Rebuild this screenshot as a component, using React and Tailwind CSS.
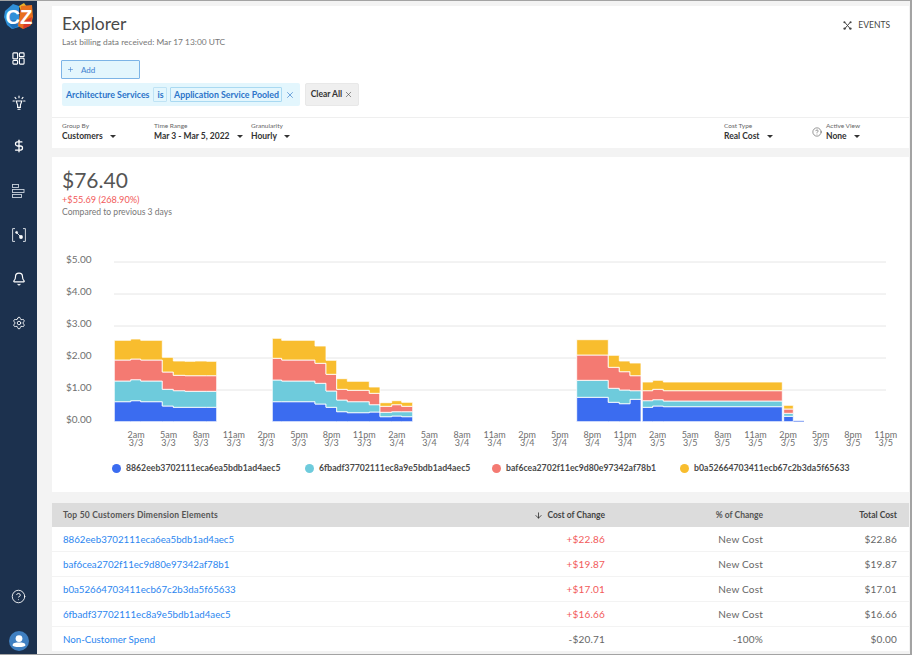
import { ArrowDown, Bell, CircleHelp, DollarSign, Plus, Settings, X } from 'lucide-react';

const font = { fontFamily: 'Lato, "Liberation Sans", sans-serif' };

const BLUE = '#3b6cf0';
const TEAL = '#6ecbdc';
const RED = '#f47a72';
const YELLOW = '#f8bd2e';

// columns are [x0, x1, blueTop, tealTop, redTop, yellowTop], measured off the reference
const GROUPS = [
  [
    [114.3, 130.7, 401.7, 381, 360, 340.3],
    [130.7, 140.7, 400.7, 379.7, 359, 339],
    [140.7, 162.3, 401.7, 381, 360, 340.3],
    [162.3, 173.3, 406, 389.3, 372, 357.3],
    [173.3, 185, 407.3, 390.7, 375.3, 361],
    [185, 195, 407.3, 391.3, 375.7, 361.3],
    [195, 206.7, 407.3, 391.3, 375.7, 361],
    [206.7, 216.7, 407.3, 391.3, 375.7, 361.3],
  ],
  [
    [272.3, 281.7, 401.7, 380, 358.3, 338.3],
    [281.7, 315, 401.7, 381, 360, 340.3],
    [315, 326, 404, 383.3, 363.3, 346],
    [326, 336.7, 407.3, 391, 374.3, 360.3],
    [336.7, 347.3, 411.7, 400, 389.3, 378.7],
    [347.3, 369.3, 412.7, 401.7, 390.3, 381.3],
    [369.3, 380, 412, 404.7, 393.3, 387],
    [380, 391.7, 416.7, 412.3, 406.3, 402.7],
    [391.7, 401.7, 416, 411.7, 404.7, 400.7],
    [401.7, 412.7, 416.7, 411.7, 406.3, 402.3],
  ],
  [
    [576.7, 608.3, 397.3, 380.3, 355, 339.7],
    [608.3, 619.3, 402.3, 388.3, 367.3, 355.3],
    [619.3, 630, 403.7, 390, 371.7, 361],
    [630, 641, 399.3, 390.7, 375.7, 363],
    [642.3, 652.7, 407.3, 400.7, 390.7, 382],
    [652.7, 663.3, 406, 399.7, 389.3, 380.3],
    [663.3, 782.3, 406.7, 401, 390.7, 382],
  ],
  [[783.7, 793.3, 416.3, 413.3, 409, 405.3]],
];

const BASE = 421.7;

const HOURS = ['2am', '5am', '8am', '11am', '2pm', '5pm', '8pm', '11pm'];
const DAYS = ['3/3', '3/4', '3/5'];
const TICKS = DAYS.flatMap((d) => HOURS.map((h) => [h, d]));

const LEGEND = [
  [BLUE, '8862eeb3702111eca6ea5bdb1ad4aec5', 'w-[193px]'],
  [TEAL, '6fbadf37702111ec8a9e5bdb1ad4aec5', 'w-[187px]'],
  [RED, 'baf6cea2702f11ec9d80e97342af78b1', 'w-[188px]'],
  [YELLOW, 'b0a52664703411ecb67c2b3da5f65633', ''],
];

const ROWS = [
  ['8862eeb3702111eca6ea5bdb1ad4aec5', '+$22.86', 'New Cost', '$22.86'],
  ['baf6cea2702f11ec9d80e97342af78b1', '+$19.87', 'New Cost', '$19.87'],
  ['b0a52664703411ecb67c2b3da5f65633', '+$17.01', 'New Cost', '$17.01'],
  ['6fbadf37702111ec8a9e5bdb1ad4aec5', '+$16.66', 'New Cost', '$16.66'],
  ['Non-Customer Spend', '-$20.71', '-100%', '$0.00'],
];

// outline of one stacked band across a group's columns
function bandPath(cols, topIdx) {
  const top = [];
  const bottom = [];
  cols.forEach((c) => {
    top.push(`${c[0]},${c[topIdx]}`, `${c[1]},${c[topIdx]}`);
    const low = topIdx === 2 ? BASE : c[topIdx - 1];
    bottom.unshift(`${c[1]},${low}`, `${c[0]},${low}`);
  });
  return `M${top.join(' L')} L${bottom.join(' L')} Z`;
}

function splitRuns(cols) {
  // columns that do not touch get their own outline
  const runs = [];
  cols.forEach((c) => {
    const last = runs[runs.length - 1];
    if (last && last[last.length - 1][1] === c[0]) last.push(c);
    else runs.push([c]);
  });
  return runs;
}

function Chart() {
  const lines = [262, 294, 326, 358, 390];
  const labels = ['$5.00', '$4.00', '$3.00', '$2.00', '$1.00', '$0.00'];
  return (
    <svg width="857" height="215" viewBox="52 245 857 215" className="block">
      {lines.map((y) => (
        <line key={y} x1="114" x2="886" y1={y} y2={y} stroke="#e6e6e6" strokeWidth="1" />
      ))}
      {labels.map((l, i) => (
        <text key={l} x="66" y={263 + i * 32} fontSize="10" fill="#6f6f6f" style={font}>
          {l}
        </text>
      ))}
      {GROUPS.flatMap(splitRuns).map((cols, i) =>
        [
          [2, BLUE],
          [3, TEAL],
          [4, RED],
          [5, YELLOW],
        ].map(([idx, color]) => (
          <path key={`${i}-${idx}`} d={bandPath(cols, idx)} fill={color} stroke="#fff" strokeWidth="0.8" />
        ))
      )}
      <rect x="793.5" y="420.8" width="10.5" height="1" fill="#7f9df3" />
      {TICKS.map(([h, d], i) => (
        <text key={i} textAnchor="middle" fontSize="9" fill="#6f6f6f" style={font}>
          <tspan x={136 + i * 32.6} y="437.5">{h}</tspan>
          <tspan x={136 + i * 32.6} y="445.5">{d}</tspan>
        </text>
      ))}
    </svg>
  );
}

function Caret() {
  return <span className="inline-block w-0 h-0 ml-[7px] mb-[1px] border-x-[3px] border-x-transparent border-t-[3px] border-t-[#333]" />;
}

function Select({ label, value, className }) {
  return (
    <div className={className}>
      <div className="text-[6.5px] leading-[9px] text-[#666]">{label}</div>
      <div className="text-[8.5px] leading-[13px] font-bold text-[#333] whitespace-nowrap">
        {value}
        <Caret />
      </div>
    </div>
  );
}

function Logo() {
  return (
    <svg width="30" height="27" viewBox="0 0 30 27">
      <path d="M1 8 L9 1 L15 3 L15 24 L8 26 L3 22 L0 14 Z" fill="#2f8fd8" />
      <path d="M3 18 L9 26 L14 23 L12 17 Z" fill="#1e6fb8" />
      <path d="M15 3 L20 0 L23 4 L17 8 Z" fill="#e9b32a" />
      <path d="M17 3 L28 2 L29 14 L27 22 L19 26 L14 23 Z" fill="#e8701f" />
      <path d="M20 18 L28 14 L26 23 L19 26 Z" fill="#d93a2b" />
      <text x="1.5" y="21" fontSize="20" fill="#fff" style={{ fontFamily: '"Liberation Sans", sans-serif', fontWeight: 700 }} textLength="27" lengthAdjust="spacingAndGlyphs">
        CZ
      </text>
    </svg>
  );
}

function GridIcon() {
  return (
    <svg width="13" height="13" viewBox="0 0 14 14" fill="none" stroke="#fff" strokeWidth="1.2">
      <rect x="1" y="1" width="5" height="6.4" rx="0.8" />
      <rect x="8" y="1" width="5" height="4" rx="0.8" />
      <rect x="1" y="9.2" width="5" height="3.8" rx="0.8" />
      <rect x="8" y="6.8" width="5" height="6.2" rx="0.8" />
    </svg>
  );
}

function BulbIcon() {
  return (
    <svg width="14" height="15" viewBox="0 0 14 15" fill="none" stroke="#fff" strokeWidth="1.1" strokeLinecap="round">
      <path d="M4.2 6 H9.8 L8.4 10.2 V12.4 H5.6 V10.2 Z" />
      <path d="M6 14.2 H8" />
      <path d="M7 1 V2.8 M3 2.4 L4 3.6 M11 2.4 L10 3.6 M1 6 H2.4 M11.6 6 H13" />
    </svg>
  );
}

function BarsIcon() {
  return (
    <svg width="13" height="14" viewBox="0 0 13 14" fill="none" stroke="#c9d2dc" strokeWidth="0.9">
      <rect x="0.5" y="0.5" width="6" height="3" />
      <rect x="0.5" y="5.5" width="11.5" height="3" />
      <rect x="0.5" y="10.5" width="9" height="3" />
    </svg>
  );
}

function NodesIcon() {
  return (
    <svg width="14" height="14" viewBox="0 0 14 14" fill="none" stroke="#e8ecf0" strokeWidth="0.9">
      <path d="M3 0.6 H0.6 V13.4 H3 M11 0.6 H13.4 V13.4 H11" />
      <path d="M4.5 4.5 L8.8 8.8" />
      <circle cx="4.6" cy="4.4" r="1" fill="#fff" />
      <circle cx="9" cy="9" r="1.9" fill="#fff" stroke="none" />
    </svg>
  );
}

function EventsIcon() {
  return (
    <svg width="9" height="9" viewBox="0 0 9 9" fill="none" stroke="#444" strokeWidth="1">
      <path d="M1.5 1 L7.5 8 M7.5 1 L1.5 8" />
      <circle cx="1.4" cy="1.2" r="1" fill="#444" stroke="none" />
      <circle cx="7.6" cy="1.2" r="1" fill="#444" stroke="none" />
      <circle cx="1.6" cy="7.6" r="1.2" fill="#444" stroke="none" />
      <circle cx="7.4" cy="7.6" r="1.2" fill="#444" stroke="none" />
    </svg>
  );
}

function Avatar() {
  return (
    <svg width="20" height="20" viewBox="0 0 20 20">
      <circle cx="10" cy="10" r="10" fill="#3f7fc1" />
      <circle cx="10" cy="7.6" r="3.4" fill="#fff" />
      <path d="M3.6 14.2 C3.6 11.6 6.6 11.4 10 11.4 C13.4 11.4 16.4 11.6 16.4 14.2 C16.4 15.4 13.6 16 10 16 C6.4 16 3.6 15.4 3.6 14.2 Z" fill="#fff" />
    </svg>
  );
}

function SideIcon({ children }) {
  return <div className="h-[44.2px] flex items-center justify-center">{children}</div>;
}

function Sidebar() {
  return (
    <div className="w-[37px] shrink-0 bg-[#1c314e] flex flex-col items-center text-white">
      <div className="h-[27px] mt-[2px] mb-[6px]">
        <Logo />
      </div>
      <SideIcon><GridIcon /></SideIcon>
      <SideIcon><BulbIcon /></SideIcon>
      <SideIcon><DollarSign size={14} strokeWidth={2.2} /></SideIcon>
      <SideIcon><BarsIcon /></SideIcon>
      <SideIcon><NodesIcon /></SideIcon>
      <SideIcon><Bell size={14} strokeWidth={2} /></SideIcon>
      <SideIcon><Settings size={14} strokeWidth={1.5} /></SideIcon>
      <div className="mt-auto flex flex-col items-center gap-[27px] pb-[3px]">
        <CircleHelp size={15} strokeWidth={1.4} />
        <Avatar />
      </div>
    </div>
  );
}

function Header() {
  return (
    <div className="bg-white">
      <div className="relative h-[110px] pl-[10px] pt-[7px]">
        <div className="absolute right-[19px] top-[13px] flex items-center gap-[6px] text-[8.5px] leading-[12px] text-[#444]">
          <EventsIcon />
          EVENTS
        </div>
        <h1 className="text-[17.5px] leading-[21px] text-[#4a4a4a]">Explorer</h1>
        <p className="mt-[2px] text-[8.4px] leading-[12px] text-[#777]">Last billing data received: Mar 17 13:00 UTC</p>
        <div className="mt-[12px] ml-[-1px] w-[79px] h-[19px] bg-[#e3f6fd] border border-[#7db4e6] rounded-[1px] flex items-center pl-[5px] gap-[7px] text-[#3f7fd0] text-[8px]">
          <Plus size={7} strokeWidth={2} />
          Add
        </div>
        <div className="mt-[4px] flex items-center gap-[5px]">
          <div className="h-[23px] w-[238px] shrink-0 rounded-[2px] bg-[#e3f6fd] flex items-center pl-[4px] text-[8.8px] font-bold text-[#2b74c9]">
            <span className="whitespace-nowrap">Architecture Services</span>
            <span className="ml-[4px] w-[14px] text-center h-[15px] leading-[14px] border border-[#bfe3f5] rounded-[1px]">is</span>
            <span className="ml-[3px] w-[112px] text-center h-[15px] leading-[14px] border border-[#a9d9f2] rounded-[1px] whitespace-nowrap">Application Service Pooled</span>
            <X size={10} strokeWidth={1.5} className="ml-[3px]" />
          </div>
          <div className="h-[23px] w-[54px] rounded-[2px] bg-[#efefef] border border-[#e8e8e8] flex items-center justify-center gap-[2px] text-[8.5px] font-bold text-[#333]">
            Clear All
            <X size={9} strokeWidth={1.4} />
          </div>
        </div>
      </div>
      <div className="h-[31px] border-t border-[#efefef] pl-[10px] pt-[3px] flex mt-px">
        <Select label="Group By" value="Customers" className="w-[92px]" />
        <Select label="Time Range" value="Mar 3 - Mar 5, 2022" className="w-[97px]" />
        <Select label="Granularity" value="Hourly" className="w-[473px]" />
        <Select label="Cost Type" value="Real Cost" className="w-[88px]" />
        <CircleHelp size={10} strokeWidth={1.2} className="text-[#333] mt-[6px] mr-[4px]" />
        <Select label="Active View" value="None" />
      </div>
    </div>
  );
}

function Summary() {
  return (
    <div className="mt-[9px] h-[335px] bg-white">
      <div className="pl-[10px] pt-[10px] h-[88px]">
        <div className="text-[21px] leading-[26px] text-[#555]">$76.40</div>
        <div className="mt-[1px] text-[9.2px] leading-[12px] text-[#f25a5a]">+$55.69 (268.90%)</div>
        <div className="text-[8.6px] leading-[12px] text-[#777]">Compared to previous 3 days</div>
      </div>
      <Chart />
      <div className="pl-[60px] mt-[2px] flex items-center text-[8.7px] leading-[12px] font-bold text-[#4a4a4a]">
        {LEGEND.map(([color, name, w]) => (
          <div key={name} className={`flex items-center gap-[5px] ${w}`}>
            <span className="w-[9px] h-[9px] rounded-full" style={{ background: color }} />
            {name}
          </div>
        ))}
      </div>
    </div>
  );
}

function Table() {
  return (
    <div className="mt-[11px] flex flex-col">
      <div className="h-[24px] bg-[#dcdcdc] flex items-center pl-[11px] pr-[12px] text-[8.5px] font-bold text-[#555]">
        <div className="flex-1 tracking-[0.2px]">Top 50 Customers Dimension Elements</div>
        <div className="w-[160px] flex items-center justify-end gap-[4px] text-[#444]">
          <ArrowDown size={9} strokeWidth={2} className="text-[#222]" />
          Cost of Change
        </div>
        <div className="w-[158px] text-right">% of Change</div>
        <div className="w-[134px] text-right text-[#444]">Total Cost</div>
      </div>
      {ROWS.map((r) => (
        <div key={r[0]} className="h-[24px] mb-px bg-white flex items-center pl-[11px] pr-[12px] text-[10px] tracking-[0.2px]">
          <div className="flex-1 text-[#2b86f0] text-[9.7px] tracking-normal">{r[0]}</div>
          <div className={r[1].startsWith('+') ? 'w-[160px] text-right text-[#f25a5a]' : 'w-[160px] text-right text-[#666]'}>{r[1]}</div>
          <div className="w-[158px] text-right text-[#666]">{r[2]}</div>
          <div className="w-[134px] text-right text-[#666]">{r[3]}</div>
        </div>
      ))}
    </div>
  );
}

export default function App() {
  return (
    <div className="w-[912px] h-[655px] flex overflow-hidden border-y border-r-2 border-[#a3a3a3] bg-[#f3f3f3]" style={font}>
      <Sidebar />
      <div className="flex-1 min-w-0 pl-[15px] pr-[1px] pt-[5px]">
        <Header />
        <Summary />
        <Table />
      </div>
    </div>
  );
}
